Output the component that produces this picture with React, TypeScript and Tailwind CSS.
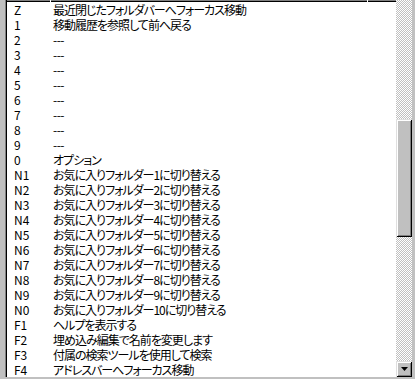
import React from "react";

const rows: [string, string][] = [
  ["Z", "最近閉じたフォルダバーへフォーカス移動"],
  ["1", "移動履歴を参照して前へ戻る"],
  ["2", "---"],
  ["3", "---"],
  ["4", "---"],
  ["5", "---"],
  ["6", "---"],
  ["7", "---"],
  ["8", "---"],
  ["9", "---"],
  ["0", "オプション"],
  ["N1", "お気に入りフォルダー1に切り替える"],
  ["N2", "お気に入りフォルダー2に切り替える"],
  ["N3", "お気に入りフォルダー3に切り替える"],
  ["N4", "お気に入りフォルダー4に切り替える"],
  ["N5", "お気に入りフォルダー5に切り替える"],
  ["N6", "お気に入りフォルダー6に切り替える"],
  ["N7", "お気に入りフォルダー7に切り替える"],
  ["N8", "お気に入りフォルダー8に切り替える"],
  ["N9", "お気に入りフォルダー9に切り替える"],
  ["N0", "お気に入りフォルダー10に切り替える"],
  ["F1", "ヘルプを表示する"],
  ["F2", "埋め込み編集で名前を変更します"],
  ["F3", "付属の検索ツールを使用して検索"],
  ["F4", "アドレスバーへフォーカス移動"],
];

export default function App() {
  return (
    <div className="w-[415px] h-[379px] bg-[#c0c0c0] flex pl-[5px] pr-[3px] pb-[2px] font-['Noto_Sans_CJK_JP',sans-serif] text-[12px] text-black [font-feature-settings:'palt']">
      <div className="flex-1 flex border-l border-l-[#808080]">
        <div className="flex-1 flex border-l border-l-black">
          <div className="flex-1 flex flex-col bg-white">
            <div className="flex h-[2px] shrink-0">
              <div className="w-[43px] border-t border-t-[#808080] border-b border-b-black" />
              <div className="w-[1px] bg-white" />
              <div className="w-[316px] border-t border-t-[#808080] border-b border-b-black" />
              <div className="w-[1px] bg-white" />
              <div className="flex-1 border-t border-t-[#808080] border-b border-b-black" />
            </div>
            {rows.map(([k, d]) => (
              <div key={k} className="flex h-[15px] leading-[15px] items-center overflow-hidden">
                <div className="w-[46px] pl-[7px] shrink-0">{k}</div>
                {d === "---" ? (
                  <div className="whitespace-nowrap tracking-[-0.5px]">{d}</div>
                ) : (
                  <div className="whitespace-nowrap tracking-[-1px]">{d}</div>
                )}
              </div>
            ))}
          </div>
          <div className="w-[16px] flex flex-col [background:repeating-conic-gradient(#c0c0c0_0%_25%,#ffffff_0%_50%)_0_0/2px_2px]">
            <div className="mt-[119px] h-[118px] bg-[#c0c0c0] shadow-[inset_1px_1px_#dfdfdf,inset_-1px_-1px_#000,inset_2px_2px_#fff,inset_-2px_-2px_#808080]" />
            <div className="mt-auto h-[16px] bg-[#c0c0c0] shadow-[inset_1px_1px_#dfdfdf,inset_-1px_-1px_#000,inset_2px_2px_#fff,inset_-2px_-2px_#808080] flex items-center justify-center">
              <svg width="7" height="4" viewBox="0 0 7 4" className="block">
                <polygon points="0,0 7,0 3.5,4" fill="#000" />
              </svg>
            </div>
          </div>
        </div>
      </div>
    </div>
  );
}
